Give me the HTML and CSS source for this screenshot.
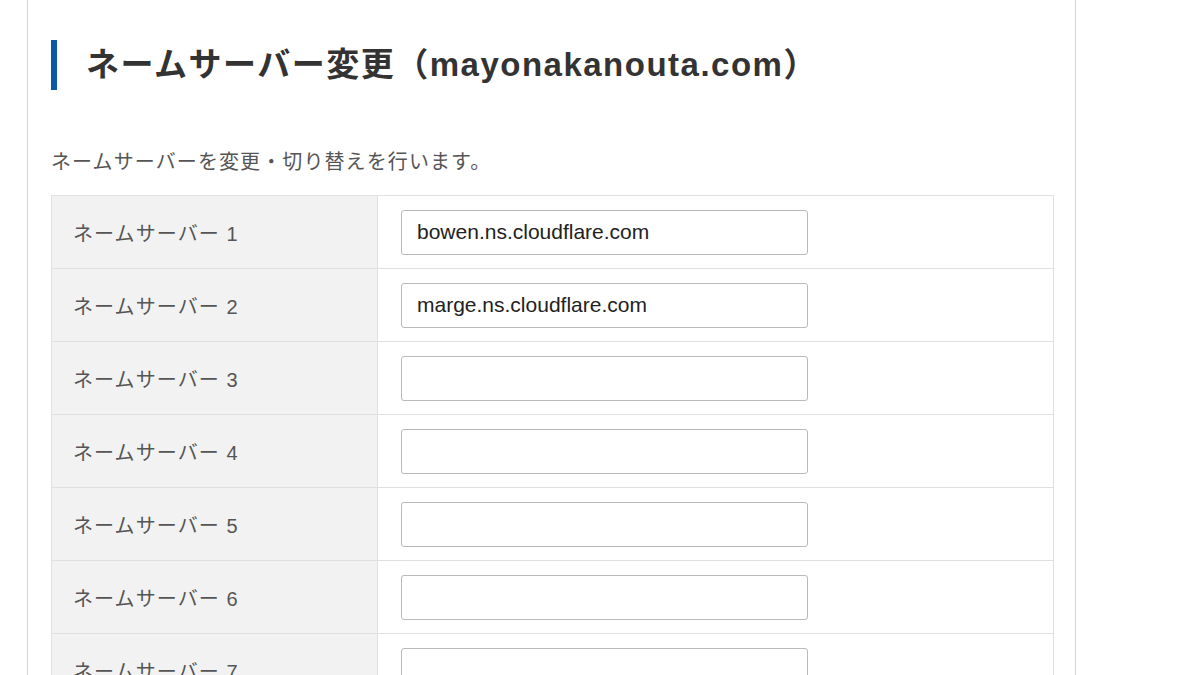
FILE: index.html
```html
<!DOCTYPE html>
<html lang="ja">
<head>
<meta charset="utf-8">
<link rel="stylesheet" href="styles.css">
</head>
<body>
<div class="panel">
  <h1 class="title">ネームサーバー変更（mayonakanouta.com）</h1>
  <p class="desc">ネームサーバーを変更・切り替えを行います。</p>
  <table class="ns-table">
    <tr><th>ネームサーバー 1</th><td><input class="field" type="text" value="bowen.ns.cloudflare.com"></td></tr>
    <tr><th>ネームサーバー 2</th><td><input class="field" type="text" value="marge.ns.cloudflare.com"></td></tr>
    <tr><th>ネームサーバー 3</th><td><input class="field" type="text" value=""></td></tr>
    <tr><th>ネームサーバー 4</th><td><input class="field" type="text" value=""></td></tr>
    <tr><th>ネームサーバー 5</th><td><input class="field" type="text" value=""></td></tr>
    <tr><th>ネームサーバー 6</th><td><input class="field" type="text" value=""></td></tr>
    <tr><th>ネームサーバー 7</th><td><input class="field" type="text" value=""></td></tr>
  </table>
</div>
</body>
</html>
```
FILE: styles.css
```css
html, body {
  margin: 0;
  padding: 0;
  background: #fff;
}
body {
  font-family: "Liberation Sans", "Noto Sans CJK JP", sans-serif;
  color: #333;
  height: 675px;
  overflow: hidden;
}
.panel {
  margin-left: 27px;
  width: 1002px;
  border-left: 1px solid #d4d4d4;
  border-right: 1px solid #d4d4d4;
  padding: 40px 22px 40px 23px;
  min-height: 700px;
}
.title {
  margin: 0;
  height: 50px;
  line-height: 50px;
  border-left: 6px solid #0b5aa8;
  padding-left: 29px;
  font-family: "Liberation Sans", "Noto Sans CJK JP", sans-serif;
  font-size: 33px;
  font-weight: 700;
  color: #333;
  letter-spacing: 1.5px;
  white-space: nowrap;
}
.desc {
  margin: 57px 0 0 0;
  font-family: "Noto Sans CJK JP", sans-serif;
  font-size: 20px;
  letter-spacing: 1.1px;
  line-height: 28px;
  color: #555;
}
.ns-table {
  margin-top: 20px;
  width: 1003px;
  border-collapse: collapse;
  border: 1px solid #e0e0e0;
}
.ns-table tr {
  height: 73px;
}
.ns-table th {
  width: 326px;
  box-sizing: border-box;
  background: #f2f2f2;
  text-align: left;
  font-weight: 400;
  font-size: 20px;
  letter-spacing: 1.1px;
  color: #555;
  padding: 0 0 0 21px;
  border: 1px solid #e0e0e0;
  vertical-align: middle;
}
.ns-table td {
  padding: 0 0 0 23px;
  border: 1px solid #e0e0e0;
  vertical-align: middle;
}
.field {
  display: block;
  width: 407px;
  height: 45px;
  box-sizing: border-box;
  border: 1px solid #b9b9b9;
  border-radius: 3px;
  padding: 0 15px;
  font-family: "Liberation Sans", sans-serif;
  font-size: 21px;
  color: #222;
  background: #fff;
}
```
